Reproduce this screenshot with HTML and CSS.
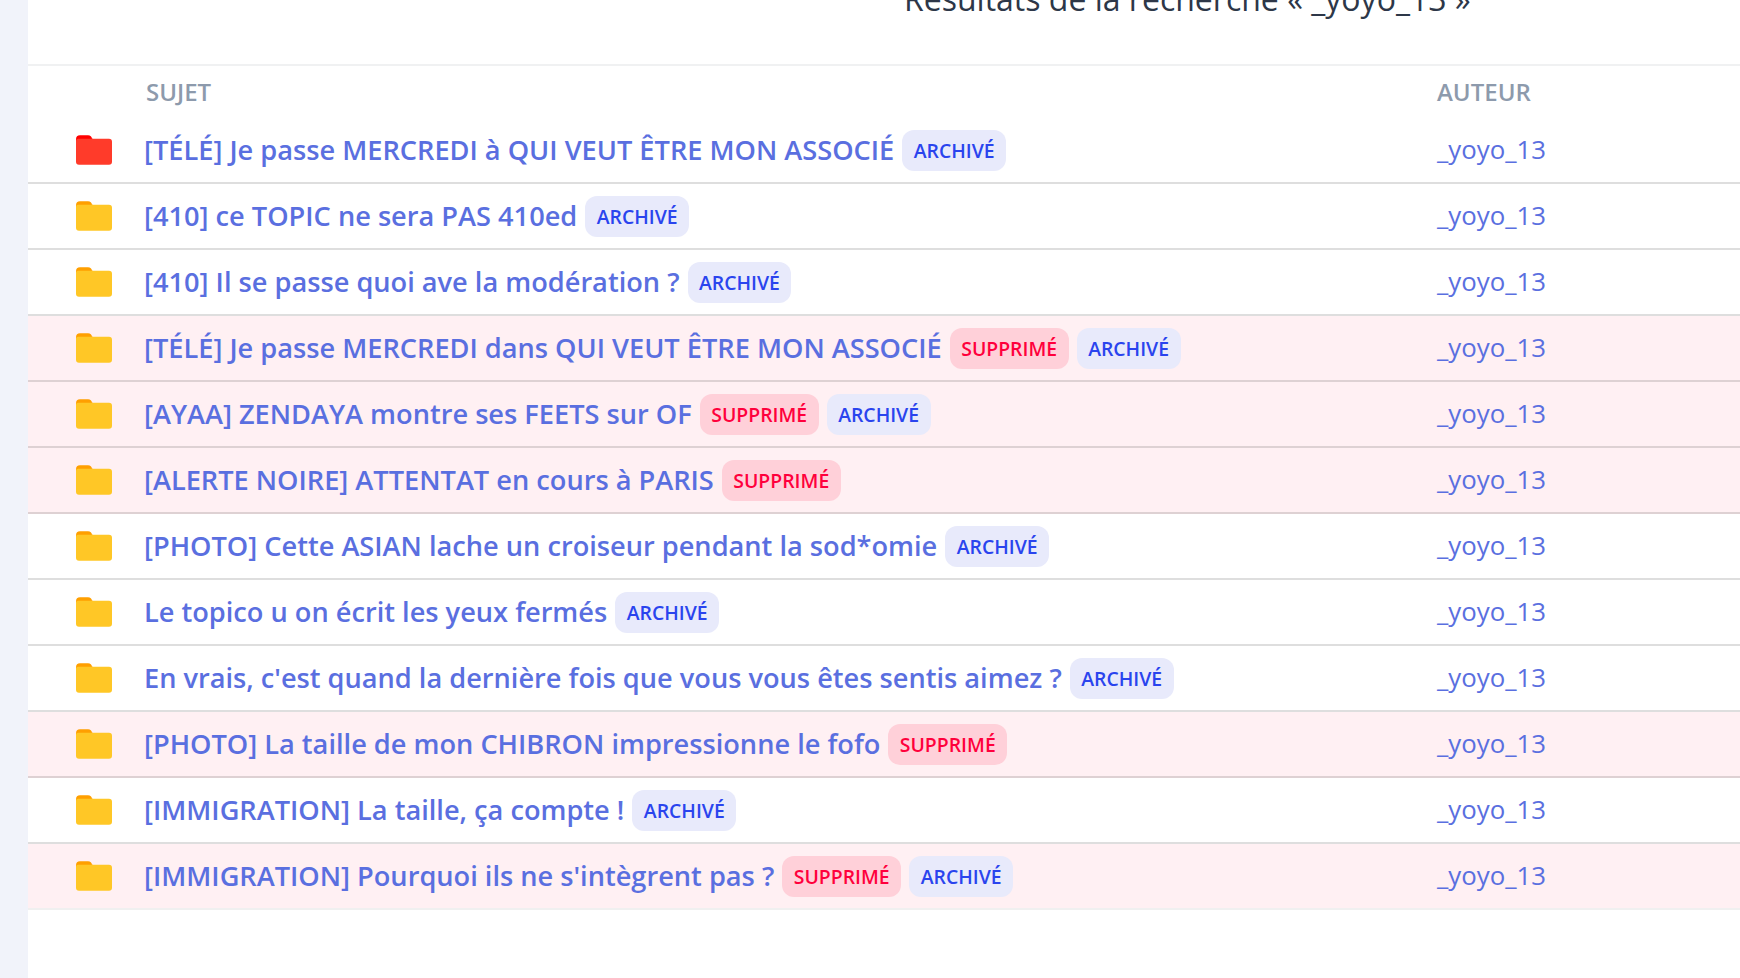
FILE: index.html
```html
<!DOCTYPE html>
<html lang="fr">
<head>
<meta charset="utf-8">
<title>Résultats de la recherche</title>
<link rel="stylesheet" href="styles.css">
</head>
<body>
<svg class="defs" width="0" height="0" aria-hidden="true">
  <symbol id="folder" viewBox="0 0 36 29.5">
    <path class="tab" d="M0 4a4 4 0 0 1 4-4h8a4 4 0 0 1 4 3.5h1V7H0z"/>
    <path class="body" d="M0 5.5a2 2 0 0 1 2-2h31a3 3 0 0 1 3 3v20a3 3 0 0 1-3 3H3a3 3 0 0 1-3-3z"/>
  </symbol>
</svg>
<aside class="rail"></aside>
<main class="panel">
  <header class="head"><h1>Résultats de la recherche « _yoyo_13 »</h1></header>
  <div class="row cols">
    <span></span><span class="col col-subj">SUJET</span><span class="col">AUTEUR</span>
  </div>
  <div class="row topic hot">
    <svg class="ico"><use href="#folder"/></svg>
    <div class="subj"><a>[TÉLÉ] Je passe MERCREDI à QUI VEUT ÊTRE MON ASSOCIÉ</a><span class="badge arch">ARCHIVÉ</span></div>
    <a class="auth">_yoyo_13</a>
  </div>
  <div class="row topic">
    <svg class="ico"><use href="#folder"/></svg>
    <div class="subj"><a>[410] ce TOPIC ne sera PAS 410ed</a><span class="badge arch">ARCHIVÉ</span></div>
    <a class="auth">_yoyo_13</a>
  </div>
  <div class="row topic">
    <svg class="ico"><use href="#folder"/></svg>
    <div class="subj"><a>[410] Il se passe quoi ave la modération ?</a><span class="badge arch">ARCHIVÉ</span></div>
    <a class="auth">_yoyo_13</a>
  </div>
  <div class="row topic del">
    <svg class="ico"><use href="#folder"/></svg>
    <div class="subj"><a>[TÉLÉ] Je passe MERCREDI dans QUI VEUT ÊTRE MON ASSOCIÉ</a><span class="badge supp">SUPPRIMÉ</span><span class="badge arch">ARCHIVÉ</span></div>
    <a class="auth">_yoyo_13</a>
  </div>
  <div class="row topic del">
    <svg class="ico"><use href="#folder"/></svg>
    <div class="subj"><a>[AYAA] ZENDAYA montre ses FEETS sur OF</a><span class="badge supp">SUPPRIMÉ</span><span class="badge arch">ARCHIVÉ</span></div>
    <a class="auth">_yoyo_13</a>
  </div>
  <div class="row topic del">
    <svg class="ico"><use href="#folder"/></svg>
    <div class="subj"><a>[ALERTE NOIRE] ATTENTAT en cours à PARIS</a><span class="badge supp">SUPPRIMÉ</span></div>
    <a class="auth">_yoyo_13</a>
  </div>
  <div class="row topic">
    <svg class="ico"><use href="#folder"/></svg>
    <div class="subj"><a>[PHOTO] Cette ASIAN lache un croiseur pendant la sod*omie</a><span class="badge arch">ARCHIVÉ</span></div>
    <a class="auth">_yoyo_13</a>
  </div>
  <div class="row topic">
    <svg class="ico"><use href="#folder"/></svg>
    <div class="subj"><a>Le topico u on écrit les yeux fermés</a><span class="badge arch">ARCHIVÉ</span></div>
    <a class="auth">_yoyo_13</a>
  </div>
  <div class="row topic">
    <svg class="ico"><use href="#folder"/></svg>
    <div class="subj"><a>En vrais, c'est quand la dernière fois que vous vous êtes sentis aimez ?</a><span class="badge arch">ARCHIVÉ</span></div>
    <a class="auth">_yoyo_13</a>
  </div>
  <div class="row topic del">
    <svg class="ico"><use href="#folder"/></svg>
    <div class="subj"><a>[PHOTO] La taille de mon CHIBRON impressionne le fofo</a><span class="badge supp">SUPPRIMÉ</span></div>
    <a class="auth">_yoyo_13</a>
  </div>
  <div class="row topic">
    <svg class="ico"><use href="#folder"/></svg>
    <div class="subj"><a>[IMMIGRATION] La taille, ça compte !</a><span class="badge arch">ARCHIVÉ</span></div>
    <a class="auth">_yoyo_13</a>
  </div>
  <div class="row topic del">
    <svg class="ico"><use href="#folder"/></svg>
    <div class="subj"><a>[IMMIGRATION] Pourquoi ils ne s'intègrent pas ?</a><span class="badge supp">SUPPRIMÉ</span><span class="badge arch">ARCHIVÉ</span></div>
    <a class="auth">_yoyo_13</a>
  </div>
</main>
</body>
</html>
```
FILE: styles.css
```css
* { box-sizing: border-box; }
html, body { margin: 0; height: 100%; overflow: hidden; }
body {
  display: flex;
  background: #fff;
  font-family: "Open Sans", "Noto Sans", sans-serif;
}
.defs { position: absolute; }
.rail { width: 28px; flex: none; background: #f1f3fa; }
.panel { flex: 1; min-width: 0; }
.head {
  height: 66px;
  border-bottom: 2px solid #f0f1f2;
  padding-left: 876px;
  overflow: hidden;
}
.head h1 {
  margin: -23px 0 0;
  font-size: 32px;
  line-height: 44px;
  font-weight: 400;
  color: #2d3748;
}
.row {
  display: grid;
  grid-template-columns: 116px 1293px 1fr;
  align-items: center;
}
.cols { height: 52px; padding-bottom: 2px; }
.col { font-size: 24px; font-weight: 600; color: #8d9aac; }
.col-subj { padding-left: 2px; }
.topic { height: 66px; border-bottom: 2px solid rgba(0, 0, 0, 0.13); }
.topic:last-child { border-bottom-color: #f0f0f0; }
.del { background: #fff0f3; }
.ico { width: 36px; height: 30px; margin-left: 48px; --tab: #ff9f00; --bod: #ffc726; }
.hot .ico { --tab: #ff0000; --bod: #ff3b2a; }
.tab { fill: var(--tab); }
.body { fill: var(--bod); }
.subj { display: flex; align-items: center; }
.subj a { font-size: 27.2px; font-weight: 600; color: #5a6fe0; white-space: nowrap; margin-right: 8px; padding-bottom: 2px; }
.auth { font-size: 25.8px; font-weight: 400; color: #5a6fe0; padding-bottom: 2px; }
.badge {
  height: 41px;
  line-height: 41px;
  padding: 0 11.5px;
  margin-right: 8px;
  border-radius: 12px;
  font-size: 19.4px;
  font-weight: 600;
}
.arch { background: #e8eafb; color: #2a44ee; }
.supp { background: #ffd0d9; color: #ff003c; }
```
